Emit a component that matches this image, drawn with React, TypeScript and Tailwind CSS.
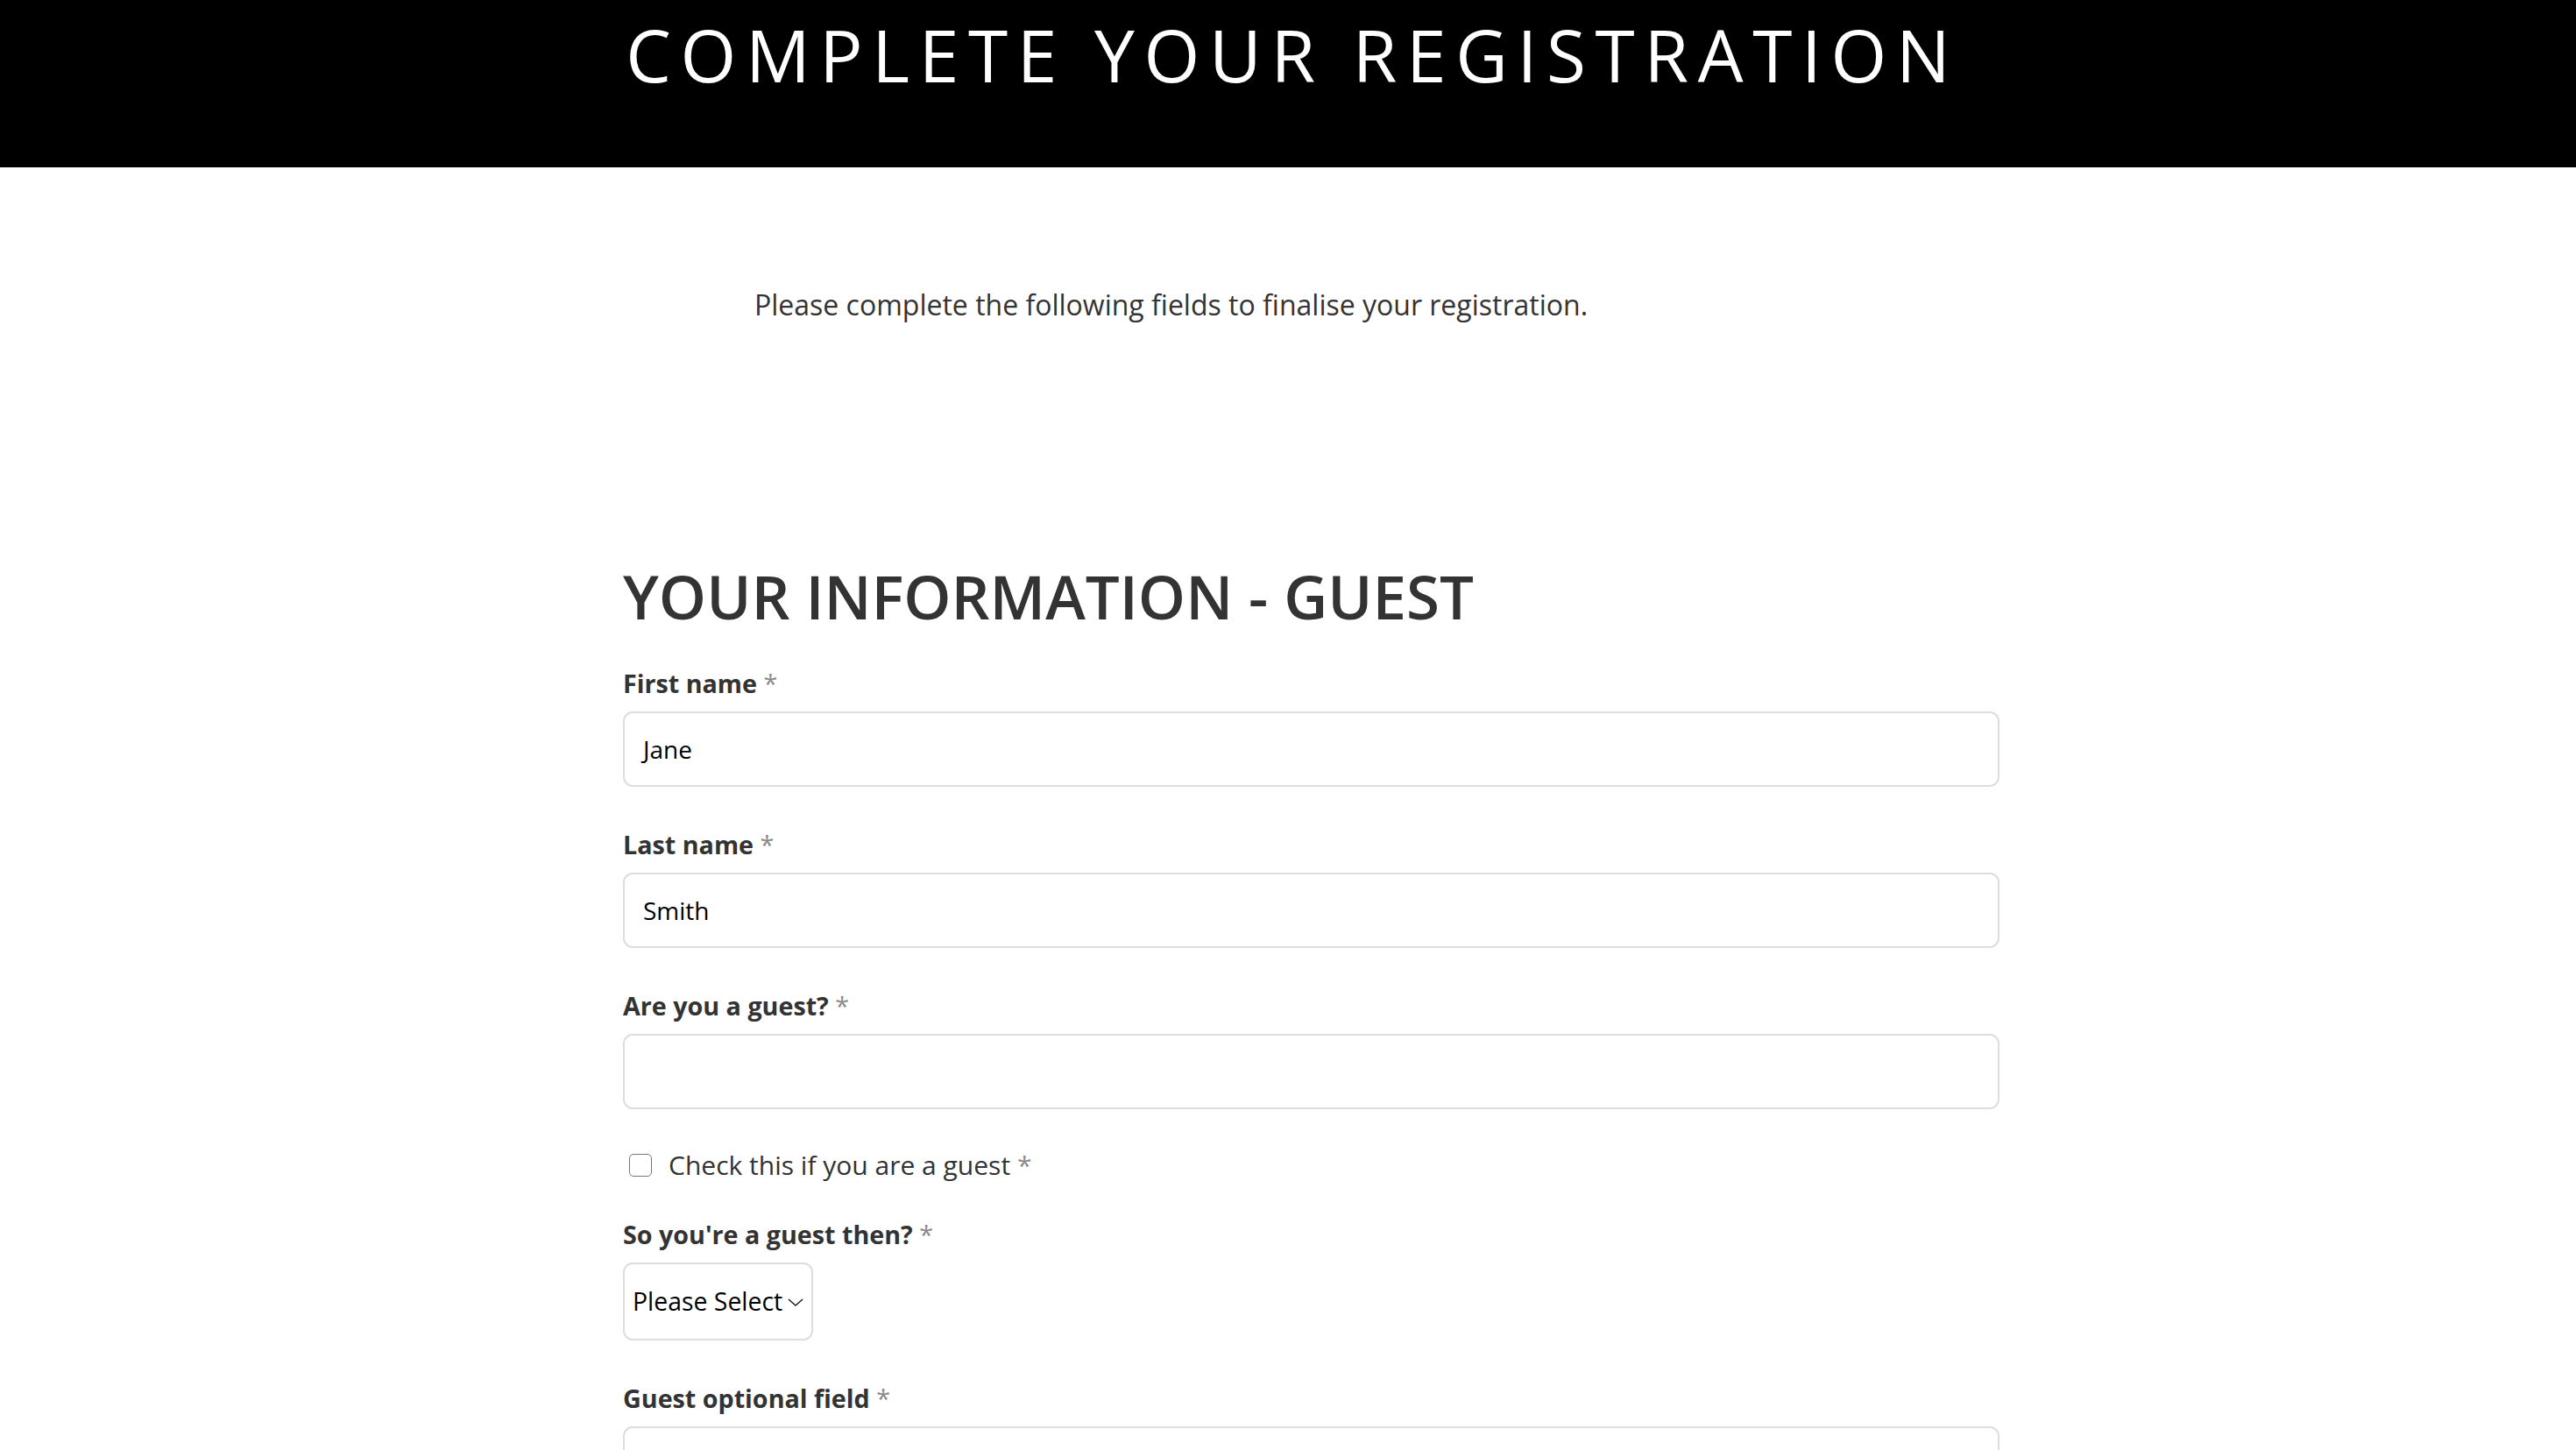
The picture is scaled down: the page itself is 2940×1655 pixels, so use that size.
import React from "react";

const font = { fontFamily: '"Open Sans", "Noto Sans", sans-serif' };

function Label({ text }: { text: string }) {
  return (
    <div className="text-[28.7px] leading-[38px] font-bold text-[#333] mb-[13px]">
      {text} <span className="text-[#888] font-normal">*</span>
    </div>
  );
}

function TextField({ label, value }: { label: string; value?: string }) {
  return (
    <div className="mb-[47px]">
      <Label text={label} />
      <div className="h-[86px] w-full border-2 border-[#ddd] rounded-[11px] flex items-center px-[21px] text-[28px] text-black">
        {value}
      </div>
    </div>
  );
}

export default function App() {
  return (
    <div className="min-h-screen bg-white" style={font}>
      <header className="h-[191px] bg-black flex justify-center">
        <h1 className="text-white text-[82px] leading-none tracking-[0.13em] font-normal pt-[21px] pl-[0.13em]">
          COMPLETE YOUR REGISTRATION
        </h1>
      </header>

      <div className="w-[1571px] ml-[711px]">
        <p className="pl-[150px] pt-[136px] text-[32px] leading-[42px] text-[#333]">
          Please complete the following fields to finalise your registration.
        </p>

        <h2 className="mt-[271px] text-[69px] leading-[80px] font-semibold text-[#333] mb-[41px]">
          YOUR INFORMATION - GUEST
        </h2>

        <TextField label="First name" value="Jane" />
        <TextField label="Last name" value="Smith" />
        <TextField label="Are you a guest?" />

        <div className="flex items-center gap-[19px] pl-[7px] mb-[41px] -mt-[2px]">
          <span className="w-[26px] h-[26px] border-[1.5px] border-[#777] rounded-[5px] bg-white" />
          <span className="text-[30px] leading-[38px] text-[#333]">
            Check this if you are a guest <span className="text-[#888]">*</span>
          </span>
        </div>

        <div className="mb-[47px]">
          <Label text="So you're a guest then?" />
          <div className="h-[89px] w-[217px] border-2 border-[#ddd] rounded-[11px] flex items-center pl-[9px] pr-[6px] text-[28.4px] text-black">
            <span>Please Select</span>
            <svg width="20" height="14" viewBox="0 0 20 14" className="ml-[5px]">
              <polyline points="2,4 10,11 18,4" fill="none" stroke="#222" strokeWidth="1.6" />
            </svg>
          </div>
        </div>

        <TextField label="Guest optional field" />
      </div>
    </div>
  );
}
